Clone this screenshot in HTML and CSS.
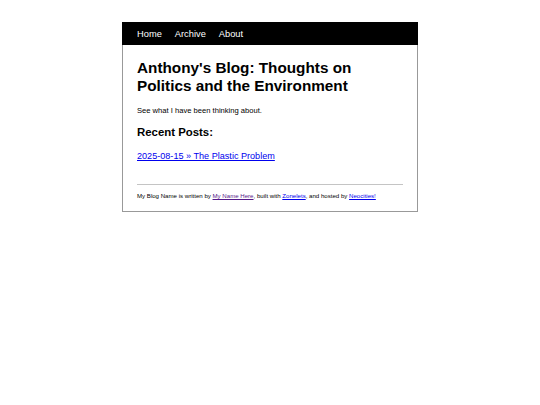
FILE: index.html
```html
<!DOCTYPE html>
<html>
<head>
<meta charset="utf-8">
<link rel="stylesheet" href="styles.css">
</head>
<body>
<div class="page">
  <nav class="nav">
    <a href="#">Home</a>
    <a href="#">Archive</a>
    <a href="#">About</a>
  </nav>
  <main class="content">
    <h1 class="title">Anthony's Blog: Thoughts on Politics and the Environment</h1>
    <p class="intro">See what I have been thinking about.</p>
    <h2 class="recent">Recent Posts:</h2>
    <ul class="posts">
      <li><a href="#">2025-08-15 » The Plastic Problem</a></li>
    </ul>
    <hr class="rule">
    <footer class="foot">My Blog Name is written by <a href="#" class="visited">My Name Here</a>, built with <a href="#">Zonelets</a>, and hosted by <a href="#">Neocities!</a></footer>
  </main>
</div>
</body>
</html>
```
FILE: styles.css
```css
html, body {
  margin: 0;
  padding: 0;
  background: #fff;
}
body {
  font-family: "Liberation Sans", Arial, sans-serif;
  color: #000;
}
.page {
  margin: 22px 0 0 122px;
  width: 296px;
  box-sizing: border-box;
  border: 1px solid #999;
  border-top: none;
}
.nav {
  background: #000;
  height: 23px;
  display: flex;
  align-items: center;
  gap: 13px;
  padding-left: 15px;
  margin: 0 -1px;
}
.nav a {
  color: #fff;
  text-decoration: none;
  font-size: 9.3px;
  line-height: 12px;
}
.content {
  padding: 14px 14px 12px 14px;
}
.title {
  font-size: 15.3px;
  line-height: 18px;
  font-weight: bold;
  margin: 0 0 11px 0;
}
.intro {
  font-size: 7.6px;
  line-height: 9px;
  margin: 0 0 11px 0;
}
.recent {
  font-size: 11.4px;
  line-height: 13px;
  font-weight: bold;
  margin: 0 0 9px 0;
}
.posts {
  list-style: none;
  margin: 0;
  padding: 0;
  line-height: 11px;
}
.posts a {
  font-size: 9.1px;
  color: #0000ee;
}
.rule {
  border: none;
  border-top: 1px solid #c4c4c4;
  margin: 22px 0 7px 0;
}
.foot {
  font-size: 6.1px;
  line-height: 7px;
}
.foot a {
  color: #0000ee;
}
.foot a.visited {
  color: #551a8b;
}
```
